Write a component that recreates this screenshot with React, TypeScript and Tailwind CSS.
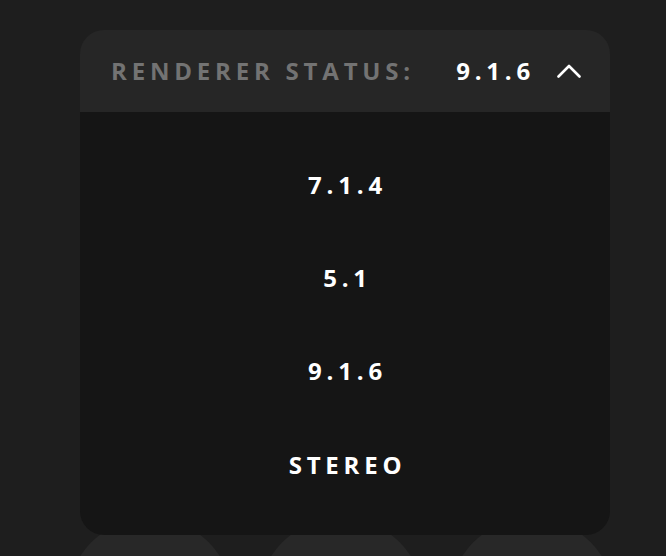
import React, { useState } from 'react';

const options = ['7.1.4', '5.1', '9.1.6', 'STEREO'];

const ChevronUp: React.FC = () => (
  <svg width="24" height="14" viewBox="0 0 24 14" fill="none">
    <polyline points="1.5,12.5 12,2 22.5,12.5" stroke="#ffffff" strokeWidth="2.6" strokeLinecap="round" strokeLinejoin="round" />
  </svg>
);

const App: React.FC = () => {
  const [selected, setSelected] = useState('9.1.6');

  return (
    <div className="h-screen overflow-hidden bg-[#1e1e1e] pt-[30px] font-['Open_Sans',sans-serif]">
      <div className="relative z-10 ml-[80px] w-[530px] rounded-[24px] overflow-hidden">
        <button className="w-full h-[82px] bg-[#262626] flex items-center justify-between pl-[31px] pr-[29px]">
          <span className="text-[24px] font-bold tracking-[0.2em] text-[#737373]">RENDERER STATUS:</span>
          <span className="flex items-center gap-[22px]">
            <span className="text-[24px] font-bold tracking-[0.2em] text-white">{selected}</span>
            <ChevronUp />
          </span>
        </button>
        <ul className="bg-[#151515] h-[423px] pt-[26px]">
          {options.map(opt => (
            <li
              key={opt}
              onClick={() => setSelected(opt)}
              className="h-[93.3px] flex items-center justify-center pl-[5px] text-[24px] font-bold tracking-[0.2em] text-white cursor-pointer"
            >
              {opt}
            </li>
          ))}
        </ul>
      </div>

      {/* buttons peeking out below the menu */}
      <div className="flex gap-[25px] ml-[67px] -mt-[17px]">
        <div className="w-[166px] h-[166px] rounded-full bg-[#282828]" />
        <div className="w-[166px] h-[166px] rounded-full bg-[#282828]" />
        <div className="w-[166px] h-[166px] rounded-full bg-[#282828]" />
      </div>
    </div>
  );
};

export default App;
